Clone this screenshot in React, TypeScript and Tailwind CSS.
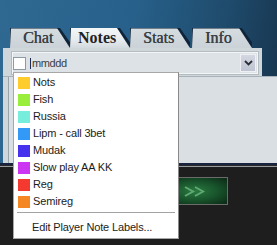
import React from 'react';

const labels = [
  { name: 'Nots', color: '#ffcc2e' },
  { name: 'Fish', color: '#99ee3c' },
  { name: 'Russia', color: '#77eedc' },
  { name: 'Lipm - call 3bet', color: '#3399f6' },
  { name: 'Mudak', color: '#4632ee' },
  { name: 'Slow play AA KK', color: '#cc36f2' },
  { name: 'Reg', color: '#f43a30' },
  { name: 'Semireg', color: '#f48624' },
];

const tabs = [
  { name: 'Chat', active: false },
  { name: 'Notes', active: true },
  { name: 'Stats', active: false },
  { name: 'Info', active: false },
];

const App = () => {
  return (
    <div className="relative w-[277px] h-[245px] overflow-hidden bg-[#1e1e1e] font-['Liberation_Sans',Arial,sans-serif]">
      {/* Top: blue backdrop with tabs and notes panel */}
      <div className="h-[163px] flex flex-col bg-[linear-gradient(100deg,#2f6891_0%,#27608a_45%,#1f4b6c_75%,#16324a_100%)]">
        <div className="h-[28px] shrink-0" />

        {/* Tabs */}
        <div className="flex h-[20px] shrink-0 pl-[10px]">
          {tabs.map((t, i) => (
            <div
              key={t.name}
              className={`relative w-[60px] h-[20px] ${i === 3 ? 'ml-[2px]' : ''}`}
            >
              <div className="absolute inset-0 [clip-path:polygon(0_0,50px_0,64px_100%,0_100%)] bg-[#10243a]" />
              <div
                className={`absolute inset-0 [clip-path:polygon(1px_0,47px_0,60px_100%,0_100%)] ${
                  t.active
                    ? 'bg-[linear-gradient(#f4f7f8_0,#e6ebee_60%,#d3dadf_100%)]'
                    : 'bg-[linear-gradient(#6f7e8a_0,#6f7e8a_1px,#d5dce0_1px,#cbd3d8_100%)]'
                }`}
              />
              <span
                className={`relative block leading-[20px] text-[16px] font-['Liberation_Serif',serif] ${
                  t.active
                    ? 'pl-[8px] font-bold text-[#1f2326]'
                    : 'pl-[13px] text-[#3a4146] [text-shadow:0.4px_0_0_#3a4146]'
                }`}
              >
                {t.name}
              </span>
            </div>
          ))}
        </div>

        {/* Combo row */}
        <div className="ml-[3px] w-[259px] h-[28px] shrink-0 bg-[#cfd7db] pt-[4px] pl-[9px]">
          <div className="flex items-center h-[22px] w-[246px] border border-[#f3f6f7] bg-[#dce2e5] outline outline-1 outline-[#b4bcc2]">
            <div className="w-[13px] h-[13px] bg-white border border-[#8d9ba5] shrink-0" />
            <div className="ml-[4px] w-px h-[11px] bg-[#1c2a55]" />
            <span className="ml-[1px] text-[11px] tracking-[-0.4px] text-[#3a3f44]">mmddd</span>
            <div className="ml-auto mr-[1px] w-[16px] h-[18px] flex items-center justify-center bg-[linear-gradient(#d3d7e2,#bfc4d2)] border border-[#eef0f4]">
              <svg width="9" height="6" viewBox="0 0 9 6">
                <path d="M1 1 L4.5 4.5 L8 1" fill="none" stroke="#2a2e38" strokeWidth="1.8" />
              </svg>
            </div>
          </div>
        </div>

        {/* Notes body */}
        <div className="flex-1 ml-[3px] bg-[#cfd7db] border-t border-[#a9b2b8] pl-[5px]">
          <div className="h-full border-l border-[#99a3aa] bg-[#d9dfe2]" />
        </div>
      </div>

      <div className="h-[2px] bg-[#18233f]" />
      <div className="h-px bg-[#2a2a2c]" />
      <div className="h-px bg-[#979ca0]" />

      {/* Bottom action */}
      <div className="pt-[10px] pl-[162px]">
        <div className="w-[66px] h-[28px] border border-[#6a6c6b] bg-[radial-gradient(ellipse_at_center,#2a7a40_0%,#17502a_55%,#0b2714_100%)] flex items-center justify-center">
          <svg width="22" height="11" viewBox="0 0 22 11">
            <path d="M1 1 L9 5.5 L1 10 M11 1 L19 5.5 L11 10" fill="none" stroke="#5fa874" strokeWidth="2" />
          </svg>
        </div>
      </div>

      {/* Label dropdown */}
      <div className="absolute left-[13px] top-[72px] w-[166px] h-[167px] bg-white border border-[#a7a7a7] border-r-[#8a8a8a] pt-[1px] text-[11px] tracking-[-0.15px] text-[#1c1c1c]">
        {labels.map((l) => (
          <div key={l.name} className="flex items-center h-[17px] pl-[4px]">
            <span className="w-[12px] h-[12px] shrink-0" style={{ backgroundColor: l.color }} />
            <span className="ml-[3px]">{l.name}</span>
          </div>
        ))}
        <div className="mx-[3px] mt-[2px] h-px bg-[#a3a3a3]" />
        <div className="flex items-center h-[17px] mt-[6px] pl-[18px]">Edit Player Note Labels...</div>
      </div>
    </div>
  );
};

export default App;
